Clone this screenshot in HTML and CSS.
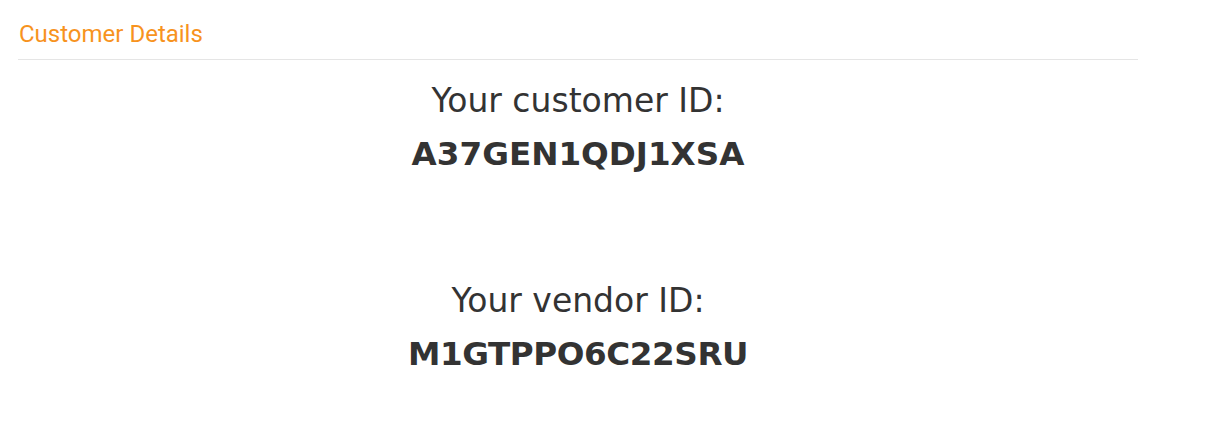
FILE: index.html
```html
<!DOCTYPE html>
<html>
<head>
<meta charset="utf-8">
<link rel="stylesheet" href="styles.css">
</head>
<body>
<div class="panel">
  <div class="panel-heading">Customer Details</div>
  <div class="panel-body">
    <div class="id-block">
      <div class="id-label">Your customer ID:</div>
      <div class="id-value">A37GEN1QDJ1XSA</div>
    </div>
    <div class="id-block">
      <div class="id-label">Your vendor ID:</div>
      <div class="id-value vendor">M1GTPPO6C22SRU</div>
    </div>
  </div>
</div>
</body>
</html>
```
FILE: styles.css
```css
html, body {
  margin: 0;
  padding: 0;
  background: #fff;
}
.panel {
  width: 1120px;
  margin-left: 18px;
}
.panel-heading {
  font-family: Roboto, sans-serif;
  font-size: 24px;
  color: #f7931e;
  padding: 20px 0 11px 1px;
  line-height: 28px;
  border-bottom: 1px solid #e5e5e5;
}
.panel-body {
  display: flex;
  flex-direction: column;
  align-items: center;
  gap: 94px;
  padding-top: 19px;
  font-family: "DejaVu Sans", Verdana, sans-serif;
  color: #333;
}
.id-block {
  display: flex;
  flex-direction: column;
  align-items: center;
}
.id-label {
  font-size: 33px;
  line-height: 44px;
}
.id-value {
  font-size: 32.6px;
  font-weight: bold;
  line-height: 62px;
}
.id-value.vendor {
  letter-spacing: -0.4px;
}
```
